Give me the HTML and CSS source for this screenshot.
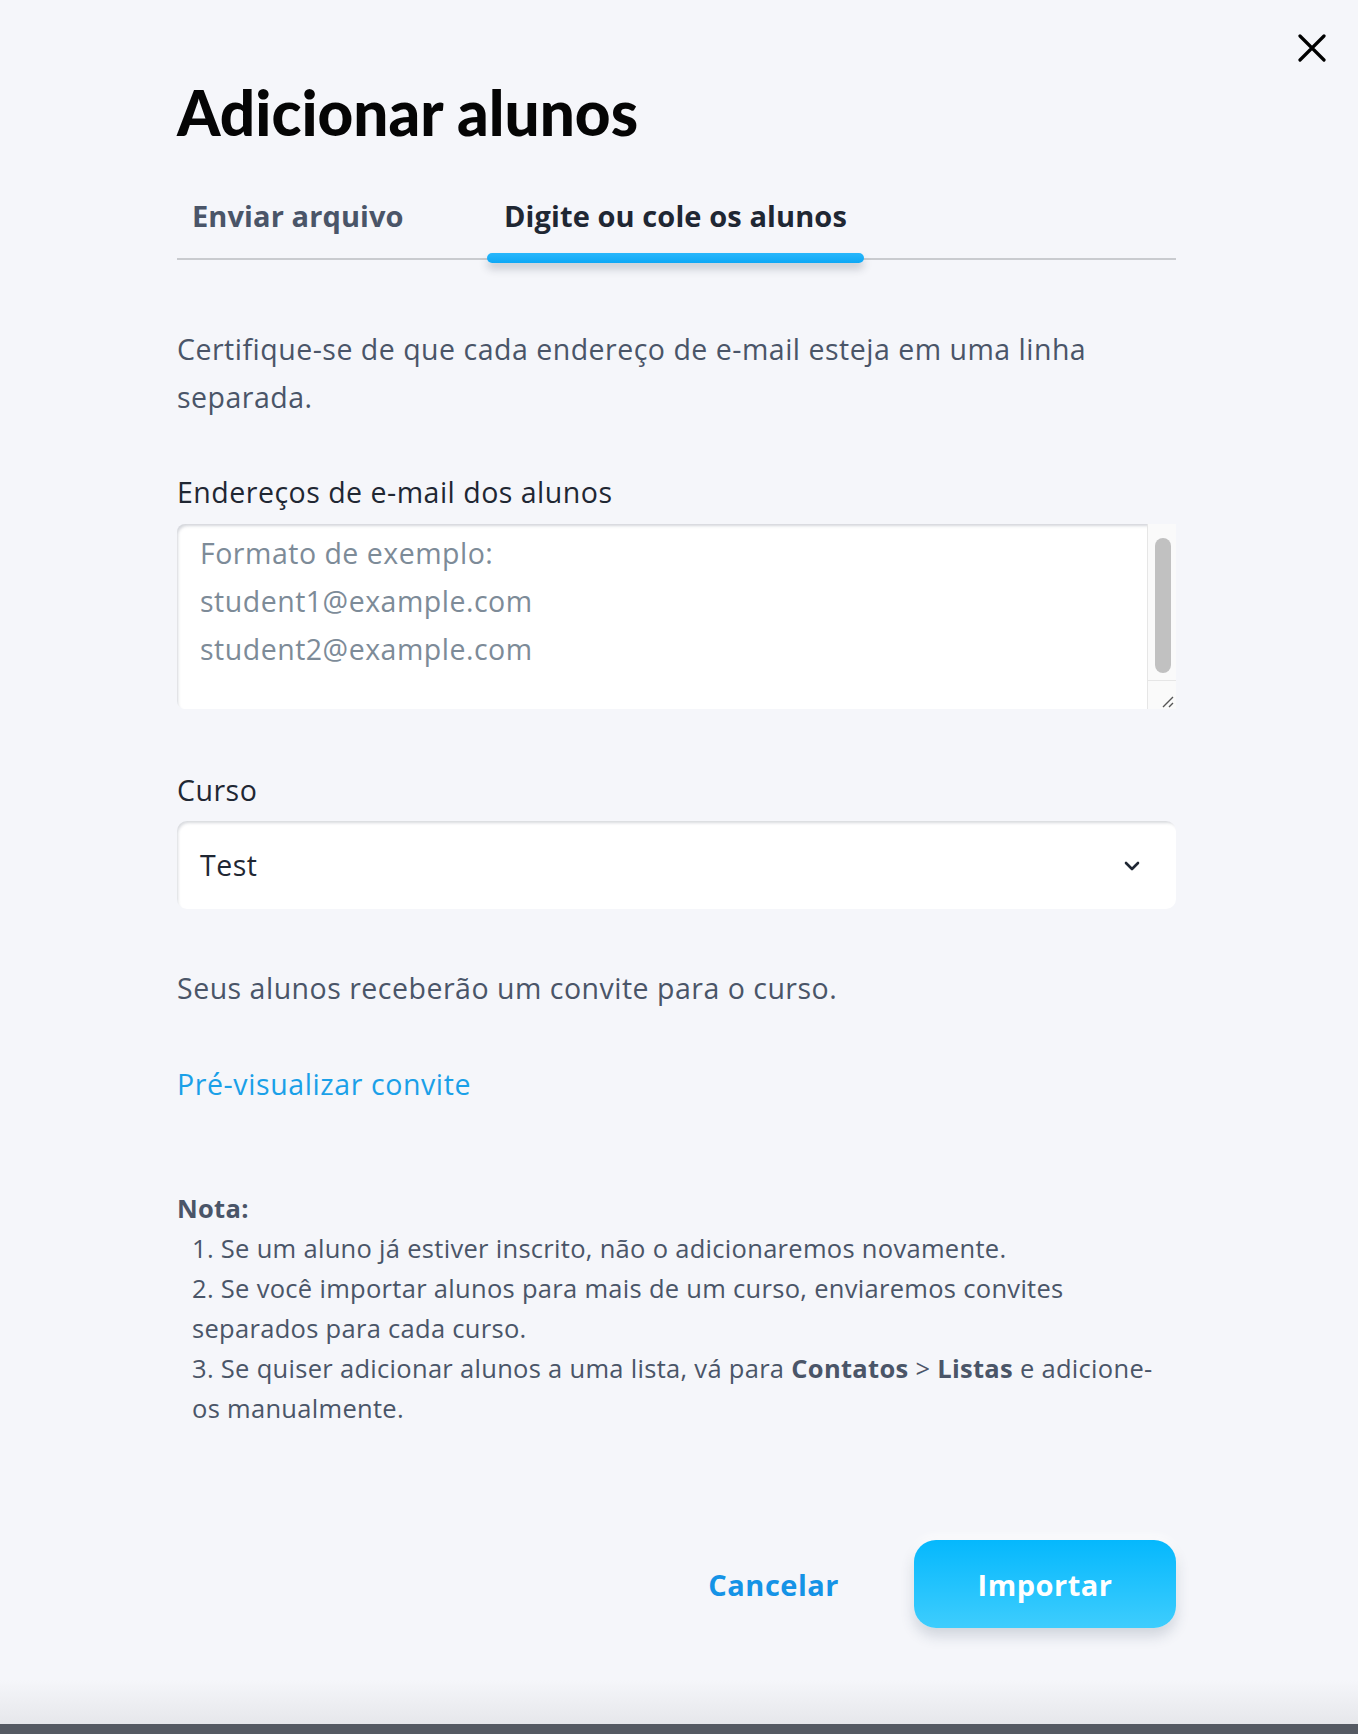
FILE: index.html
```html
<!DOCTYPE html>
<html lang="pt-BR">
<head>
<meta charset="utf-8">
<title>Adicionar alunos</title>
<link rel="stylesheet" href="styles.css">
</head>
<body>
<div class="modal">
  <button class="close" aria-label="Fechar">
    <svg width="28" height="28" viewBox="0 0 28 28"><path d="M2 2 L26 26 M26 2 L2 26" stroke="#000" stroke-width="3.2" stroke-linecap="round" fill="none"/></svg>
  </button>
  <main class="content">
    <h1 class="title">Adicionar alunos</h1>
    <nav class="tabs">
      <span class="tab tab-first">Enviar arquivo</span>
      <span class="tab tab-active">Digite ou cole os alunos</span>
    </nav>
    <p class="desc">Certifique-se de que cada endereço de e-mail esteja em uma linha separada.</p>
    <label class="label" for="emails">Endereços de e-mail dos alunos</label>
    <div class="textarea-wrap">
      <textarea id="emails" class="textarea" placeholder="Formato de exemplo:&#10;student1@example.com&#10;student2@example.com"></textarea>
      <div class="scrollbar"><div class="thumb"></div></div>
      <div class="resizer"><svg width="29" height="29" viewBox="0 0 29 29"><path d="M15 26 L25 16 M21 26 L25 22" stroke="#555" stroke-width="1.4" fill="none"/></svg></div>
    </div>
    <label class="label label-course">Curso</label>
    <div class="select">
      <span class="select-value">Test</span>
      <svg class="chevron" width="16" height="10" viewBox="0 0 16 10"><path d="M2 2 L8 8 L14 2" stroke="#1f2733" stroke-width="2.6" fill="none" stroke-linecap="round" stroke-linejoin="round"/></svg>
    </div>
    <p class="info">Seus alunos receberão um convite para o curso.</p>
    <a class="preview" href="#">Pré-visualizar convite</a>
    <div class="note">
      <div class="note-title">Nota:</div>
      <ol class="note-list">
        <li>Se um aluno já estiver inscrito, não o adicionaremos novamente.</li>
        <li>Se você importar alunos para mais de um curso, enviaremos convites separados para cada curso.</li>
        <li>Se quiser adicionar alunos a uma lista, vá para <b>Contatos</b> &gt; <b>Listas</b> e adicione-os manualmente.</li>
      </ol>
    </div>
    <div class="actions">
      <button class="btn-cancel">Cancelar</button>
      <button class="btn-import">Importar</button>
    </div>
  </main>
</div>
<div class="bottom-bar"></div>
</body>
</html>
```

FILE: styles.css
```css
* { box-sizing: border-box; }
html, body { margin: 0; padding: 0; }
body {
  background: #555a63;
  font-family: "Open Sans", "Noto Sans", sans-serif;
  color: #4a5568;
}
.modal {
  position: relative;
  height: 1724px;
  background: linear-gradient(to bottom, #f5f6fa 0, #f5f6fa 1680px, #e6e7eb 1724px);
}
.close {
  position: absolute;
  left: 1298px;
  top: 34px;
  width: 28px;
  height: 28px;
  padding: 0;
  border: 0;
  background: none;
  display: block;
}
.close svg { display: block; }
.content {
  width: 999px;
  margin-left: 177px;
  padding-top: 76px;
}
.title {
  margin: 0;
  font-family: Lato, "Open Sans", sans-serif;
  font-size: 62px;
  line-height: 72px;
  font-weight: 900;
  color: #050505;
}
.tabs {
  margin-top: 48px;
  display: flex;
  gap: 65px;
  border-bottom: 2px solid #c9cbcf;
  height: 64px;
}
.tab {
  position: relative;
  flex: none;
  white-space: nowrap;
  font-size: 29px;
  letter-spacing: 0.1px;
  line-height: 40px;
  font-weight: 700;
  color: #4a5568;
  padding: 0 17px;
}
.tab-first { padding-left: 15px; width: 245px; }
.tab-active { color: #1f2733; }
.tab-active::after {
  content: "";
  position: absolute;
  left: 0;
  right: 0;
  top: 57px;
  height: 10px;
  border-radius: 5px;
  background: linear-gradient(#28b7fb, #0ea8f5);
  box-shadow: 0 6px 8px rgba(40, 50, 70, 0.22);
}
.desc, .info {
  margin: 65px 0 0;
  font-size: 28.5px;
  letter-spacing: 0.5px;
  line-height: 48px;
  color: #4a5568;
}
.label {
  display: block;
  margin-top: 47px;
  font-size: 28.5px;
  letter-spacing: 0.5px;
  line-height: 48px;
  color: #1f2733;
}
.textarea-wrap {
  position: relative;
  margin-top: 8px;
  height: 185px;
}
.textarea {
  display: block;
  width: 100%;
  height: 185px;
  border: 0;
  border-radius: 8px;
  background: #fff;
  box-shadow: inset 2px 3px 3px -1px rgba(60, 70, 90, 0.22);
  padding: 5px 60px 5px 23px;
  font-family: "Open Sans", "Noto Sans", sans-serif;
  font-size: 28.5px;
  letter-spacing: 0.5px;
  line-height: 48px;
  color: #1f2733;
  resize: none;
  overflow: hidden;
  outline: none;
}
.textarea::placeholder { color: #7d8b98; opacity: 1; }
.scrollbar {
  position: absolute;
  right: 0;
  top: 0;
  width: 29px;
  height: 156px;
  background: #fafafa;
  border-left: 1px solid #e6e6e6;
  padding: 14px 6px 0 7px;
}
.thumb {
  width: 16px;
  height: 135px;
  border-radius: 8px;
  background: #c1c1c1;
}
.resizer {
  position: absolute;
  right: 0;
  bottom: 0;
  width: 29px;
  height: 29px;
  background: #fafafa;
  border-left: 1px solid #e6e6e6;
  border-top: 1px solid #e6e6e6;
}
.resizer svg { display: block; }
.label-course { margin-top: 57px; }
.select {
  margin-top: 7px;
  height: 88px;
  background: #fff;
  border-radius: 10px;
  box-shadow: inset 2px 3px 3px -1px rgba(60, 70, 90, 0.2);
  display: flex;
  align-items: center;
  justify-content: space-between;
  padding: 0 36px 0 23px;
}
.select-value {
  font-size: 28.5px;
  letter-spacing: 0.5px;
  color: #1f2733;
}
.chevron { display: block; margin-top: 2px; }
.info { margin-top: 55px; }
.preview {
  display: block;
  margin-top: 48px;
  font-size: 28.5px;
  letter-spacing: 0.6px;
  line-height: 48px;
  color: #1aa0e8;
  text-decoration: none;
}
.note {
  margin-top: 80px;
  font-size: 25.5px;
  letter-spacing: 0.3px;
  line-height: 40px;
  color: #4a5568;
}
.note-title { font-weight: 700; }
.note-list {
  margin: 0;
  padding: 0 0 0 15px;
  list-style: none;
  counter-reset: n;
}
.note-list li { counter-increment: n; }
.note-list li::before { content: counter(n) ". "; }
.note-list b { font-weight: 700; }
.actions {
  margin-top: 112px;
  display: flex;
  justify-content: flex-end;
  align-items: center;
  gap: 75px;
}
.btn-cancel {
  border: 0;
  background: none;
  padding: 0;
  font-family: "Open Sans", "Noto Sans", sans-serif;
  font-size: 29px;
  font-weight: 700;
  letter-spacing: 0.5px;
  color: #1593e6;
}
.btn-import {
  width: 262px;
  height: 88px;
  border: 0;
  border-radius: 22px;
  background: linear-gradient(#05b8fd, #3ecdfd);
  box-shadow: 0 8px 14px rgba(40, 60, 90, 0.18), 0 -4px 10px rgba(255, 255, 255, 0.9);
  font-family: "Open Sans", "Noto Sans", sans-serif;
  font-size: 29px;
  font-weight: 700;
  letter-spacing: 0.5px;
  color: #fff;
}
.bottom-bar {
  height: 10px;
  background: #555a63;
}
```
